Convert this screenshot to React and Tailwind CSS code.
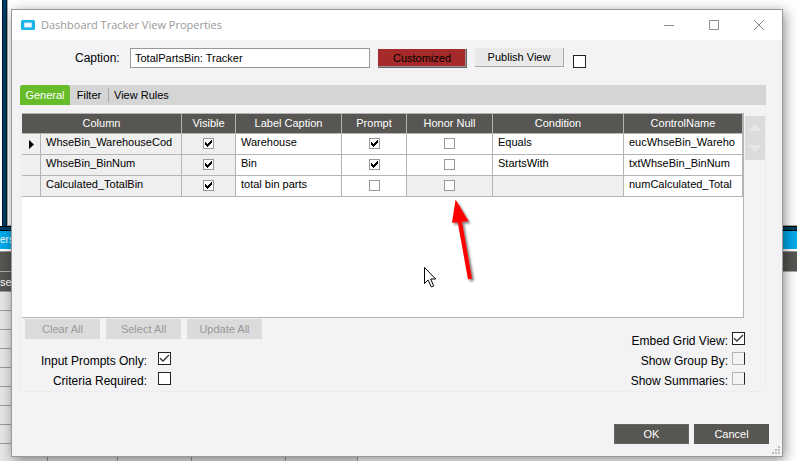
import React from "react";

const columns = ["Visible", "Label Caption", "Prompt", "Honor Null", "Condition", "ControlName"];

const rows = [
  { column: "WhseBin_WarehouseCod", visible: true, label: "Warehouse", prompt: true, honor: false, condition: "Equals", control: "eucWhseBin_Wareho", current: true },
  { column: "WhseBin_BinNum", visible: true, label: "Bin", prompt: true, honor: false, condition: "StartsWith", control: "txtWhseBin_BinNum" },
  { column: "Calculated_TotalBin", visible: true, label: "total bin parts", prompt: false, honor: false, condition: "", control: "numCalculated_Total", locked: true },
];

function GridCheck({ checked, label }) {
  return (
    <div className="flex justify-center pb-[2px]">
      <span className="grid size-[11px]">
        <input
          type="checkbox"
          defaultChecked={checked}
          aria-label={label}
          className="peer col-start-1 row-start-1 size-[11px] appearance-none border border-[#999] bg-white"
        />
        <svg viewBox="0 0 11 11" className="pointer-events-none invisible col-start-1 row-start-1 size-[11px] peer-checked:visible" shapeRendering="crispEdges">
          <path d="M2 4h1v1h1v1h1v-1h1v-1h1v-1h1v-1h1v3h-1v1h-1v1h-1v1h-1v1h-1v-1h-1v-1h-1z" fill="#000" />
        </svg>
      </span>
    </div>
  );
}

function FormCheck({ id, checked, dim, label }) {
  return (
    <span className="grid size-[13px]">
      <input
        id={id}
        type="checkbox"
        aria-label={label}
        defaultChecked={checked}
        className={
          dim
            ? "peer col-start-1 row-start-1 size-[13px] appearance-none border border-[#b4b4b4] border-r-[#222] bg-[#f3f3f5]"
            : "peer col-start-1 row-start-1 size-[13px] appearance-none border border-[#222] bg-white"
        }
      />
      <svg viewBox="0 0 13 13" className="pointer-events-none invisible col-start-1 row-start-1 size-[13px] peer-checked:visible">
        <path d="M2 6.2 5 9l6-6" fill="none" stroke="#333" strokeWidth="1.3" />
      </svg>
    </span>
  );
}

function CheckRow({ id, label, checked, dim, gap }) {
  return (
    <div className={gap === "wide" ? "flex h-5 items-start justify-end gap-[11px]" : "flex h-5 items-start justify-end gap-1"}>
      <label htmlFor={id} className="pt-[2px] text-[12px] leading-[15px]">{label}</label>
      <FormCheck id={id} checked={checked} dim={dim} />
    </div>
  );
}

function Backdrop() {
  return (
    <div aria-hidden="true" className="absolute inset-0 flex flex-col overflow-hidden bg-white text-[11px]">
      <div className="flex h-[226px] shrink-0">
        <div className="w-[2px] bg-white" />
        <div className="w-[5px] border-x border-[#001a2e] bg-[#003e63]" />
        <div className="flex-1 border-b border-l border-[#aaa] bg-white" />
      </div>
      <div className="h-[5px] shrink-0 border-y border-black bg-[#003e63]" />
      <div className="h-[18px] shrink-0 bg-[#00aaeb] text-[10px] leading-[18px] text-white">ers</div>
      <div className="h-[2px] shrink-0 bg-white" />
      <div className="h-[20px] shrink-0 border-t border-[#999] bg-[#575653]" />
      <div className="flex flex-1">
        <div className="w-[358px] border-r border-[#999] bg-[#e6e6e6]">
          <div className="h-[20px] border-t border-[#aaa] bg-[#575653] leading-[20px] text-white">se</div>
          {[0, 1, 2, 3, 4, 5, 6, 7].map((n) => (
            <div key={n} className="h-[19px] border-t border-[#999]" />
          ))}
          <div className="flex h-[19px] border-t border-[#999]">
            <div className="w-12 border-r border-[#999]" />
            <div className="w-[70px] border-r border-[#999]" />
            <div className="w-[74px] border-r border-[#999]" />
            <div className="w-[94px] border-r border-[#999]" />
          </div>
        </div>
        <div className="flex-1 border-t border-[#aaa] bg-white" />
      </div>
    </div>
  );
}

function TitleBar() {
  return (
    <header className="flex h-[30px] items-center justify-between bg-white pr-[18px] pl-[9px]">
      <div className="flex items-center gap-[6px]">
        <svg viewBox="0 0 14 10" className="h-[10px] w-[14px]">
          <rect width="14" height="10" rx="1.5" fill="#18b6ea" />
          <path d="M3.5 3h7v4h-7z" fill="#fff" stroke="#c9e6f0" strokeWidth="1" />
        </svg>
        <h1 className="font-['Open_Sans','Noto_Sans',sans-serif] text-[11px] leading-[16px] text-[#999]">Dashboard Tracker View Properties</h1>
      </div>
      <div className="flex items-center gap-[35px] text-[#8c8c8c]">
        <button aria-label="Minimize" className="size-[10px]">
          <svg viewBox="0 0 10 10" className="size-[10px]"><path d="M0 5.5h10" stroke="currentColor" /></svg>
        </button>
        <button aria-label="Maximize" className="size-[10px]">
          <svg viewBox="0 0 10 10" className="size-[10px]"><path d="M.5.5h9v9h-9z" fill="none" stroke="currentColor" /></svg>
        </button>
        <button aria-label="Close" className="size-[10px]">
          <svg viewBox="0 0 10 10" className="size-[10px]"><path d="m0 0 10 10M10 0 0 10" stroke="currentColor" /></svg>
        </button>
      </div>
    </header>
  );
}

function PromptGrid() {
  const cell = "h-[21px] border-r border-b border-[#b4b4b4] p-0";
  return (
    <div className="h-[205px] flex-1 border-t border-r border-b border-[#b4b4b4] bg-white">
      <table className="w-full table-fixed border-separate border-spacing-0 text-[11px] leading-[13px]">
        <colgroup>
          <col className="w-[19px]" />
          <col className="w-[141px]" />
          <col className="w-[54px]" />
          <col className="w-[106px]" />
          <col className="w-[65px]" />
          <col className="w-[86px]" />
          <col className="w-[131px]" />
          <col />
        </colgroup>
        <thead>
          <tr className="bg-[#575653] text-white">
            <th colSpan={2} className="h-[20px] border-r border-b border-[#b4b4b4] p-0 font-normal">Column</th>
            {columns.map((c) => (
              <th key={c} className="h-[20px] border-r border-b border-[#b4b4b4] p-0 font-normal">{c}</th>
            ))}
          </tr>
        </thead>
        <tbody>
          {rows.map((r) => (
            <tr key={r.column}>
              <td className={`${cell} bg-[#efefef]`}>
                {r.current && (
                  <svg viewBox="0 0 5 9" className="ml-[7px] h-[9px] w-[5px]"><path d="M0 0 5 4.5 0 9z" /></svg>
                )}
              </td>
              <td className={`${cell} overflow-hidden bg-[#efefef] pb-1 pl-[5px] whitespace-nowrap`}>{r.column}</td>
              <td className={`${cell} bg-[#efefef]`}><GridCheck checked={r.visible} label={`${r.column} visible`} /></td>
              <td className={`${cell} pb-1 pl-[5px]`}>{r.label}</td>
              <td className={cell}><GridCheck checked={r.prompt} label={`${r.column} prompt`} /></td>
              <td className={r.locked ? `${cell} bg-[#efefef]` : cell}><GridCheck checked={r.honor} label={`${r.column} honor null`} /></td>
              <td className={r.locked ? `${cell} bg-[#efefef] pb-1 pl-[5px]` : `${cell} pb-1 pl-[5px]`}>{r.condition}</td>
              <td className={`${cell} overflow-hidden pb-1 pl-[5px] whitespace-nowrap`}>{r.control}</td>
            </tr>
          ))}
        </tbody>
      </table>
    </div>
  );
}

function Annotations() {
  return (
    <svg aria-hidden="true" viewBox="0 0 70 100" className="pointer-events-none absolute top-[195px] left-[420px] h-[100px] w-[70px]">
      <defs>
        <filter id="soft" x="-30%" y="-30%" width="160%" height="160%">
          <feDropShadow dx="2" dy="2" stdDeviation="1.2" floodColor="#000" floodOpacity="0.5" />
        </filter>
      </defs>
      <path d="M35.6 4.5 48.5 26.3 42 26.8 52 83.6 48 84.6 37.8 27.4 32 27.8Z" fill="#f00" filter="url(#soft)" />
      <path d="M4.5 72.5v16l3.6-3.4 3.2 6.8 2.4-1-3-6.9h5z" fill="#fff" stroke="#000" />
    </svg>
  );
}

export default function App() {
  return (
    <div className="relative min-h-screen overflow-hidden pt-[9px] pr-[14px] pb-1 pl-[11px] font-['Liberation_Sans',Arial,sans-serif] text-black">
      <Backdrop />
      <main className="relative border border-[#999] bg-[#f3f3f5] shadow-[2px_3px_12px_rgba(0,0,0,0.45)]">
        <TitleBar />

        <div className="flex h-[45px] items-start pt-2 pl-[63px]">
          <label htmlFor="caption" className="w-[55px] pt-[3px] text-[12px] leading-[15px]">Caption:</label>
          <input
            id="caption"
            type="text"
            defaultValue="TotalPartsBin: Tracker"
            className="h-5 w-60 border border-[#999] bg-white px-1 text-[11px]"
          />
          <button className="mt-px ml-2 h-[19px] w-[89px] border-r border-b border-[#666] bg-[#a52a2a] text-[11px] leading-[18px] shadow-[inset_-1px_-1px_#a09090]">Customized</button>
          <button className="ml-2 h-[19px] w-[89px] border-r border-b border-[#aaa] bg-[#e9e9e9] text-[11px] leading-[18px]">Publish View</button>
          <div className="pt-[7px] pl-[9px]"><FormCheck id="publish" label="Publish" /></div>
        </div>

        <div className="pr-4 pl-2">
          <nav role="tablist" className="flex h-5 items-center bg-[#d5d5d5] text-[11px] leading-[20px]">
            <button role="tab" aria-selected="true" className="h-5 w-[50px] rounded-t-[3px] bg-[#66bd29] text-white">General</button>
            <button role="tab" aria-selected="false" className="w-[38px]">Filter</button>
            <span className="h-[14px] w-px bg-[#aaa69a]" />
            <button role="tab" aria-selected="false" className="ml-[5px]">View Rules</button>
          </nav>

          <section className="h-[287px] border border-t-0 border-[#ededef] pt-2 pl-px">
            <div className="flex items-start gap-px">
              <PromptGrid />
              <div className="mt-[3px] flex h-11 w-5 flex-col items-center justify-between bg-[#dbdbdb] pt-2 pb-2">
                <button aria-label="Move up"><svg viewBox="0 0 14 7" className="block h-[7px] w-[14px]"><path d="M0 7 7 0l7 7z" fill="#e6e6e6" /></svg></button>
                <button aria-label="Move down"><svg viewBox="0 0 14 7" className="block h-[7px] w-[14px]"><path d="M0 0h14L7 7z" fill="#e6e6e6" /></svg></button>
              </div>
            </div>

            <div className="flex justify-between pt-px pr-5 pl-[3px]">
              <div>
                <div className="flex gap-[6px] text-[11px] text-[#999]">
                  <button className="h-5 w-[75px] bg-[#dbdbdb]">Clear All</button>
                  <button className="h-5 w-[75px] bg-[#dbdbdb]">Select All</button>
                  <button className="h-5 w-[75px] bg-[#dbdbdb]">Update All</button>
                </div>
                <div className="w-[146px] pt-[13px]">
                  <CheckRow id="prompts" label="Input Prompts Only:" checked gap="wide" />
                  <CheckRow id="criteria" label="Criteria Required:" gap="wide" />
                </div>
              </div>
              <div className="pt-[13px]">
                <CheckRow id="embed" label="Embed Grid View:" checked />
                <CheckRow id="group" label="Show Group By:" dim />
                <CheckRow id="summaries" label="Show Summaries:" dim />
              </div>
            </div>
          </section>
        </div>

        <footer className="flex h-16 items-end justify-end">
          <div className="flex gap-[5px] pb-3 text-[11px] text-white">
            <button className="h-5 w-[75px] border border-[#666] bg-[#575653] leading-[18px]">OK</button>
            <button className="h-5 w-[75px] bg-[#575653]">Cancel</button>
          </div>
          <svg aria-hidden="true" viewBox="0 0 8 8" className="mr-[2px] mb-[2px] ml-[3px] size-2">
            <path d="M0 6h2v2H0zM3 6h2v2H3zM6 6h2v2H6zM3 3h2v2H3zM6 3h2v2H6zM6 0h2v2H6z" fill="#bbb" />
          </svg>
        </footer>
      </main>
      <Annotations />
    </div>
  );
}
